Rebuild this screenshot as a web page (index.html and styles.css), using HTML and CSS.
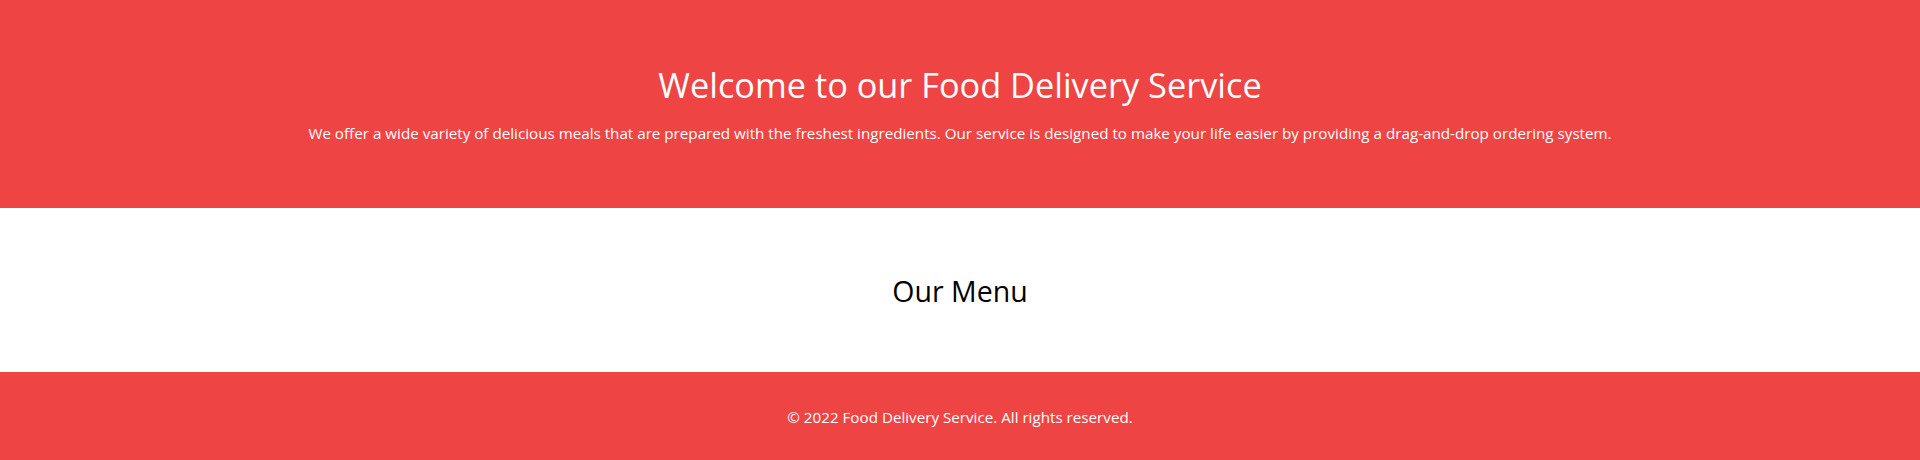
FILE: index.html
```html
<!DOCTYPE html>
<html lang="en">
<head>
<meta charset="utf-8">
<title>Food Delivery Service</title>
<link rel="stylesheet" href="styles.css">
</head>
<body>
<header class="hero">
  <h1 class="hero-title">Welcome to our Food Delivery Service</h1>
  <p class="hero-text">We offer a wide variety of delicious meals that are prepared with the freshest ingredients. Our service is designed to make your life easier by providing a drag-and-drop ordering system.</p>
</header>
<section class="menu">
  <h2 class="menu-title">Our Menu</h2>
</section>
<footer class="footer">
  <p class="footer-text">© 2022 Food Delivery Service. All rights reserved.</p>
</footer>
</body>
</html>
```

FILE: styles.css
```css
* { box-sizing: border-box; }
html, body { margin: 0; padding: 0; }
body {
  font-family: "Open Sans", "Noto Sans", sans-serif;
  color: #000;
  background: #fff;
}
.hero {
  background: #ef4444;
  color: #fff;
  text-align: center;
  padding: 65px 0 63px;
}
.hero-title {
  margin: 0 0 16px;
  font-size: 34.3px;
  line-height: 40px;
  font-weight: 400;
}
.hero-text {
  margin: 0;
  font-size: 15.2px;
  line-height: 24px;
}
.menu {
  text-align: center;
  padding: 65px 0 63px;
}
.menu-title {
  margin: 0;
  font-size: 28.5px;
  line-height: 36px;
  font-weight: 400;
}
.footer {
  background: #ef4444;
  color: #fff;
  text-align: center;
  padding: 33px 0 31px;
}
.footer-text {
  margin: 0;
  font-size: 15.2px;
  line-height: 24px;
}
```
